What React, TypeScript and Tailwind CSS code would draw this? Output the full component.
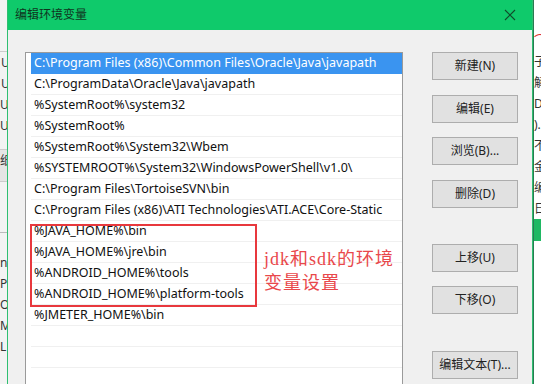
import React from "react";

const paths = [
  "C:\\Program Files (x86)\\Common Files\\Oracle\\Java\\javapath",
  "C:\\ProgramData\\Oracle\\Java\\javapath",
  "%SystemRoot%\\system32",
  "%SystemRoot%",
  "%SystemRoot%\\System32\\Wbem",
  "%SYSTEMROOT%\\System32\\WindowsPowerShell\\v1.0\\",
  "C:\\Program Files\\TortoiseSVN\\bin",
  "C:\\Program Files (x86)\\ATI Technologies\\ATI.ACE\\Core-Static",
  "%JAVA_HOME%\\bin",
  "%JAVA_HOME%\\jre\\bin",
  "%ANDROID_HOME%\\tools",
  "%ANDROID_HOME%\\platform-tools",
  "%JMETER_HOME%\\bin",
  "",
  "",
  "",
];

const font = { fontFamily: '"Noto Sans", "Noto Sans CJK SC", sans-serif' };

const Btn = ({ label, className = "" }: { label: string; className?: string }) => (
  <div
    className={`w-[86px] h-[28px] flex items-center justify-center bg-[#e1e1e1] border border-[#adadad] text-[12px] text-[#222] ${className}`}
  >
    {label}
  </div>
);

export default function App() {
  return (
    <div className="w-[541px] h-[384px] overflow-hidden flex bg-white" style={font}>
      {/* window behind, left */}
      <div className="w-[7px] shrink-0 bg-[#f3f3f3] flex flex-col text-[12px] text-[#333] leading-[21px] overflow-hidden">
        <div className="h-[52px] border-b border-[#ccc]" />
        <div className="pl-[1px]">U</div>
        <div className="pl-[1px]">U</div>
        <div>US</div>
        <div>US</div>
        <div className="h-[14px] border-b border-[#ccc]" />
        <div className="h-[32px] bg-[#e5e5e5] border-b border-[#ccc]">纸</div>
        <div className="h-[50px]" />
        <div className="h-[20px] border-t border-[#bbb]" />
        <div>n</div>
        <div>P</div>
        <div>O</div>
        <div>M</div>
        <div>L</div>
      </div>

      {/* dialog */}
      <div className="w-[526px] shrink-0 flex flex-col border-x border-[#2fbf71] bg-[#f0f0f0]">
        <div className="h-[30px] shrink-0 bg-[#0fca6b] flex items-center justify-between pl-[7px] pr-[16px]">
          <span className="text-[12px] text-[#10341e]">编辑环境变量</span>
          <svg width="12" height="12" viewBox="0 0 12 12" stroke="#114a2a" strokeWidth="1.1">
            <path d="M1 1 L11 11 M11 1 L1 11" />
          </svg>
        </div>
        <div className="flex pt-[22px] pl-[17px]">
          <div className="relative w-[378px] h-[340px] bg-white border border-[#9a9a9a] border-b-0 pl-[5px]">
            {paths.map((p, i) => (
              <div
                key={i}
                className={`h-[21px] flex items-center pl-[3px] text-[12.5px] whitespace-nowrap overflow-hidden ${
                  i === 0 ? "bg-[#3a94f0] text-white" : "text-[#111] border-b border-[#f0f0f0]"
                }`}
              >
                {p}
              </div>
            ))}
            <div className="absolute left-[4px] top-[171px] w-[227px] h-[83px] border-2 border-[#e8383d]" />
            <div
              className="absolute left-[238px] top-[194px] text-[18px] leading-[24px] tracking-[1px] text-[#e9484b]"
              style={{ fontFamily: '"Liberation Serif", "Noto Sans CJK SC", serif' }}
            >
              jdk和sdk的环境
              <br />
              变量设置
            </div>
          </div>
          <div className="flex flex-col pl-[29px]">
            <Btn label="新建(N)" />
            <Btn label="编辑(E)" className="mt-[15px]" />
            <Btn label="浏览(B)..." className="mt-[14px]" />
            <Btn label="删除(D)" className="mt-[15px]" />
            <Btn label="上移(U)" className="mt-[36px]" />
            <Btn label="下移(O)" className="mt-[14px]" />
            <Btn label="编辑文本(T)..." className="mt-[37px]" />
          </div>
        </div>
      </div>

      {/* window behind, right */}
      <div className="w-[8px] shrink-0 bg-white border-l border-[#2a7a52] flex flex-col text-[12px] text-[#333] leading-[21px] overflow-hidden">
        <div className="h-[30px]" />
        <div className="text-[#d33]">⌒</div>
        <div>子</div>
        <div>解</div>
        <div>D</div>
        <div>).</div>
        <div>不</div>
        <div>金</div>
        <div>编</div>
        <div>日</div>
        <div className="h-[22px] bg-[#1fb863]" />
      </div>
    </div>
  );
}
